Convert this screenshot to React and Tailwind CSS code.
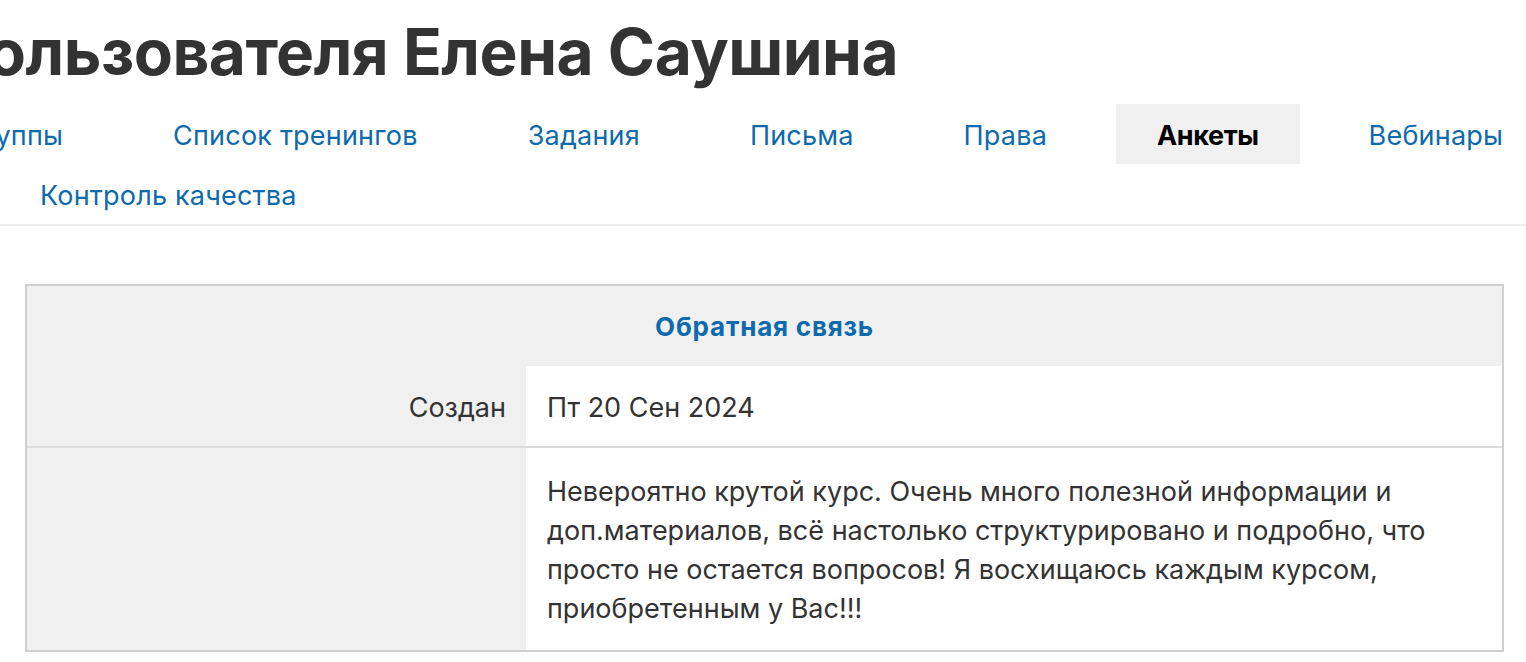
const tabs = ["Группы", "Список тренингов", "Задания", "Письма", "Права", "Анкеты", "Вебинары"];

export default function App() {
  return (
    <div
      className="min-h-screen w-[1526px] overflow-hidden bg-white text-[#333]"
      style={{ fontFamily: "Inter, 'Noto Sans', sans-serif" }}
    >
      {/* title, page scrolled sideways */}
      <div className="overflow-hidden whitespace-nowrap pt-[12px]">
        <h1 className="ml-[-310px] text-[64px] font-bold leading-[80px] tracking-[-0.5px] text-[#333]">
          Анкеты пользователя Елена Саушина
        </h1>
      </div>

      {/* tabs */}
      <nav className="mt-[12px] border-b-2 border-[#eee]">
        <div className="flex ml-[-76px] gap-[28px] whitespace-nowrap">
          {tabs.map((t) => (
            <span
              key={t}
              className={
                t === "Анкеты"
                  ? "h-[60px] px-[41px] pt-[4px] flex items-center bg-[#f0f0f0] text-[27px] tracking-[-0.4px] font-bold text-black"
                  : "h-[60px] px-[41px] pt-[4px] flex items-center text-[27px] tracking-[0.2px] text-[#0d6aad]"
              }
            >
              {t}
            </span>
          ))}
        </div>
        <div className="flex">
          <span className="h-[60px] px-[40px] pt-[4px] flex items-center text-[27px] tracking-[0.2px] text-[#0d6aad]">
            Контроль качества
          </span>
        </div>
      </nav>

      {/* feedback table */}
      <div className="ml-[25px] mt-[58px] w-[1479px] border-2 border-[#d0d0d0] bg-[#f0f0f0]">
        <div className="h-[80px] flex items-center justify-center text-[26px] tracking-[0.8px] font-bold text-[#0d6aad]">
          Обратная связь
        </div>
        <div className="grid grid-cols-[499px_1fr] border-b-2 border-[#dcdcdc]">
          <div className="h-[80px] pt-[4px] flex items-center justify-end pr-[20px] text-[27px] text-[#333]">Создан</div>
          <div className="pt-[4px] flex items-center bg-white pl-[21px] text-[27px] text-[#333]">Пт 20 Сен 2024</div>
        </div>
        <div className="grid grid-cols-[499px_1fr]">
          <div />
          <div className="bg-white pl-[21px] pr-[40px] pt-[24px] pb-[22px] text-[27px] leading-[39px] text-[#333]">
            Невероятно крутой курс. Очень много полезной информации и доп.материалов, всё настолько структурировано и
            подробно, что просто не остается вопросов! Я восхищаюсь каждым курсом, приобретенным у Вас!!!
          </div>
        </div>
      </div>
    </div>
  );
}
